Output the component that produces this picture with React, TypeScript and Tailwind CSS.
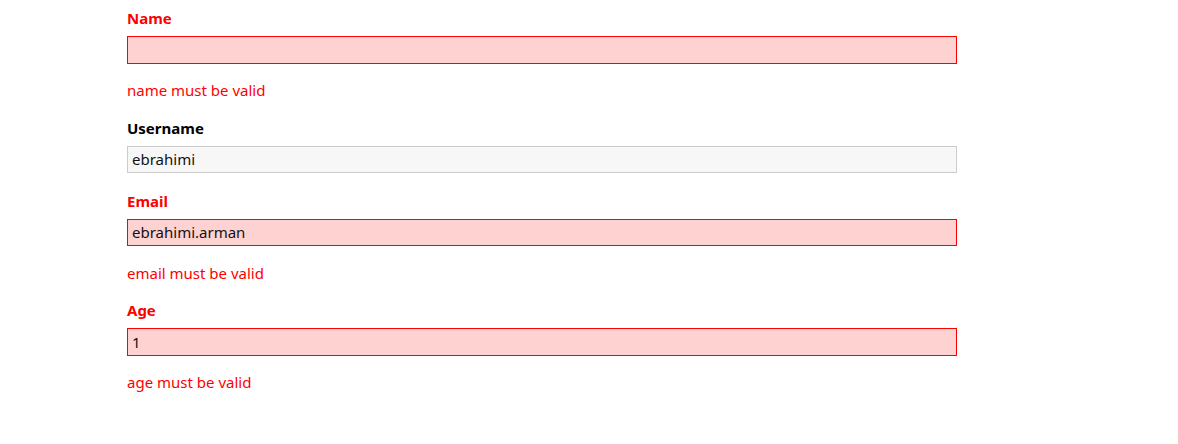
import React from "react";

interface Field {
  label: string;
  value: string;
  error?: string;
}

const fields: Field[] = [
  { label: "Name", value: "", error: "name must be valid" },
  { label: "Username", value: "ebrahimi" },
  { label: "Email", value: "ebrahimi.arman", error: "email must be valid" },
  { label: "Age", value: "1", error: "age must be valid" },
];

const App = () => {
  return (
    <div className="min-h-[444px] bg-white font-['Noto_Sans',sans-serif] text-black">
      <div className="w-[830px] ml-[127px] pt-[8px]">
        {fields.map((field) => (
          <div
            key={field.label}
            className={field.error ? "mb-[15.5px]" : "mb-[17.5px]"}
          >
            <label
              className={`block text-[15px] leading-[20px] font-bold ${
                field.error ? "text-[#ff0000]" : "text-black"
              }`}
            >
              {field.label}
            </label>
            <input
              type="text"
              readOnly
              value={field.value}
              className={
                field.error
                  ? "block w-full h-[27.5px] mt-[8px] px-[4px] border border-[#ff0000] bg-[#ffd2d2] text-[15px] text-[#111] outline-none"
                  : "block w-full h-[27.5px] mt-[8px] px-[4px] border border-[#cccccc] bg-[#f7f7f7] text-[15px] text-[#111] outline-none"
              }
            />
            {field.error && (
              <p className="mt-[14.5px] text-[15px] leading-[24px] text-[#ff0000]">
                {field.error}
              </p>
            )}
          </div>
        ))}
      </div>
    </div>
  );
};

export default App;
